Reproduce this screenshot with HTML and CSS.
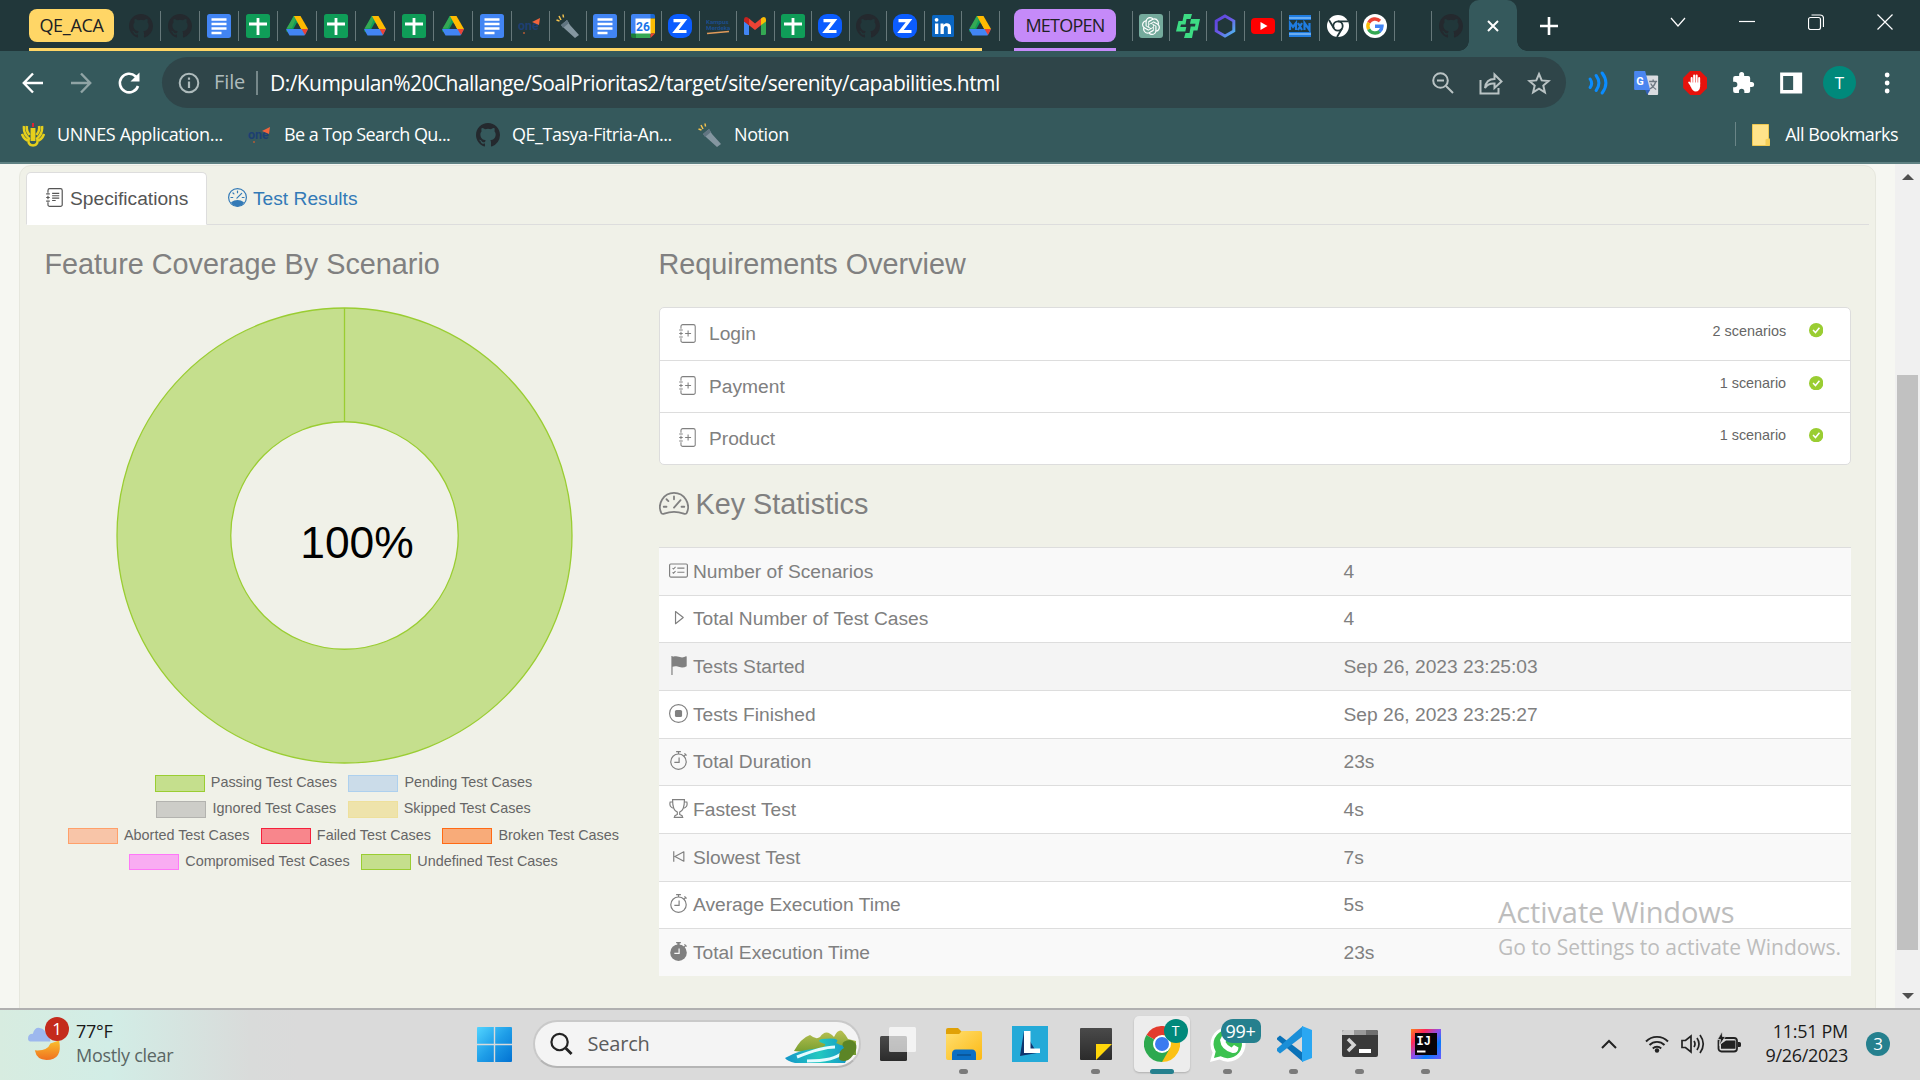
FILE: index.html
```html
<!DOCTYPE html>
<html lang="en">
<head>
<meta charset="utf-8">
<title>Serenity Report - Capabilities</title>
<link rel="stylesheet" href="styles.css">
</head>
<body>
<svg class="sprite" aria-hidden="true">
  <defs>
    <linearGradient id="g-win" x1="0" y1="0" x2="1" y2="1"><stop offset="0" stop-color="#52d4ff"/><stop offset=".5" stop-color="#1f9ee8"/><stop offset="1" stop-color="#0272d2"/></linearGradient>
    <linearGradient id="g-moon" x1="0" y1="0" x2="0" y2="1"><stop offset="0" stop-color="#fbc02d"/><stop offset="1" stop-color="#ef7020"/></linearGradient>
    <linearGradient id="g-folder" x1="0" y1="0" x2="1" y2="1"><stop offset="0" stop-color="#ffdf70"/><stop offset="1" stop-color="#fcb914"/></linearGradient>
    <linearGradient id="g-hex" x1="0" y1="0" x2="1" y2="1"><stop offset="0" stop-color="#5b3fd8"/><stop offset=".5" stop-color="#6c5ae8"/><stop offset="1" stop-color="#4cc0f0"/></linearGradient>
    <linearGradient id="g-ij" x1="0" y1="0" x2="1" y2="1"><stop offset="0" stop-color="#fc801d"/><stop offset=".25" stop-color="#fe2857"/><stop offset=".5" stop-color="#8a50f0"/><stop offset=".7" stop-color="#087cfa"/><stop offset="1" stop-color="#6b57ff"/></linearGradient>
    <linearGradient id="g-river" x1="0" y1="0" x2="1" y2="0"><stop offset="0" stop-color="#1496c8"/><stop offset=".5" stop-color="#22c8c0"/><stop offset="1" stop-color="#128cc8"/></linearGradient>
    <linearGradient id="g-hill" x1="0" y1="0" x2="0" y2="1"><stop offset="0" stop-color="#b8c050"/><stop offset="1" stop-color="#6f9a2c"/></linearGradient>
    <linearGradient id="g-dark" x1="0" y1="0" x2="0" y2="1"><stop offset="0" stop-color="#4a4a4a"/><stop offset="1" stop-color="#2b2b2b"/></linearGradient>
  </defs>
  <symbol id="github" viewBox="0 0 16 16"><path fill="#24292e" d="M8 0C3.58 0 0 3.58 0 8c0 3.54 2.29 6.53 5.47 7.59.4.07.55-.17.55-.38 0-.19-.01-.82-.01-1.49-2.01.37-2.53-.49-2.69-.94-.09-.23-.48-.94-.82-1.13-.28-.15-.68-.52-.01-.53.63-.01 1.08.58 1.23.82.72 1.21 1.87.87 2.33.66.07-.52.28-.87.51-1.07-1.78-.2-3.64-.89-3.64-3.95 0-.87.31-1.59.82-2.15-.08-.2-.36-1.02.08-2.12 0 0 .67-.21 2.2.82a7.6 7.6 0 0 1 4 0c1.53-1.04 2.2-.82 2.2-.82.44 1.1.16 1.92.08 2.12.51.56.82 1.27.82 2.15 0 3.07-1.87 3.75-3.65 3.95.29.25.54.73.54 1.48 0 1.07-.01 1.93-.01 2.2 0 .21.15.46.55.38A8 8 0 0 0 16 8c0-4.42-3.58-8-8-8z"/></symbol>
  <symbol id="docs" viewBox="0 0 24 24"><rect width="24" height="24" rx="2.500" fill="#4285f4"/><path stroke="#fff" stroke-width="2.300" d="M4.500 5.500h15M4.500 10h15M4.500 14.500h15M4.500 19h10"/></symbol>
  <symbol id="sheets" viewBox="0 0 24 24"><rect width="24" height="24" rx="2.500" fill="#0f9d58"/><path stroke="#fff" stroke-width="2.800" d="M12 4v17M3 10h18"/></symbol>
  <symbol id="drive" viewBox="0 0 24 24"><path fill="#0f9d58" d="M8.500 2h1.500l3.500 6-7.500 13-5-4z"/><path fill="#34a853" d="M9 2h3.200L7 14l-5.700.8z"/><path fill="#ffba00" d="M9 2h6.500L23 15h-7z"/><path fill="#4285f4" d="M1 15h22l-3.500 6.500h-15z"/><path fill="#ea4335" d="M16.500 15H23l-3 6z"/><path fill="#21373a" d="M12 8.500l3.700 6.500H8.300z"/></symbol>
  <symbol id="torch" viewBox="0 0 24 24"><path fill="#8496a0" d="M5 11l6-5 3 5 9 10-4 3-10-9z"/><path fill="#617581" d="M5 11l6-5 2 3-6 5z"/><path stroke="#f4c34e" stroke-width="1.500" d="M.5 6l3 1M3 2l2 4M7 .5l.5 3"/></symbol>
  <symbol id="zed" viewBox="0 0 24 24"><rect width="24" height="24" rx="9" fill="#0b5cff"/><path fill="none" stroke="#fff" stroke-width="3.200" d="M5.500 6.700H16L7.500 17.500H18.500"/></symbol>
  <symbol id="gmail" viewBox="0 0 24 24"><path fill="#4285f4" d="M1 7l5 4v10H2.500Q1 21 1 19.500z"/><path fill="#34a853" d="M23 7l-5 4v10h3.500q1.500 0 1.500-1.500z"/><path fill="#ea4335" d="M6 4.500l6 5 6-5v6.800l-6 4.700-6-4.700z"/><path fill="#c5221f" d="M1 5.500Q1 3 3 3t3 1.500v6.800L1 7.500z"/><path fill="#fbbc04" d="M23 5.500Q23 3 21 3t-3 1.500v6.800l5-3.800z"/></symbol>
  <symbol id="linkedin" viewBox="0 0 24 24"><rect x="1" y="1" width="22" height="22" rx="1.500" fill="#0a66c2"/><path fill="#fff" d="M4 9.500h3.300V20H4zM9.500 9.500h3v1.500c2-2.800 7.500-2.200 7.500 2.800V20h-3.200v-5.500c0-3.300-4-3.200-4 0V20H9.500z"/><circle cx="5.600" cy="5.800" r="1.900" fill="#fff"/></symbol>
  <symbol id="openai" viewBox="0 0 24 24"><rect width="24" height="24" rx="3" fill="#74aa9c"/><path fill="#fff" transform="translate(3 3) scale(.75)" d="M22.2819 9.8211a5.9847 5.9847 0 0 0-.5157-4.9108 6.0462 6.0462 0 0 0-6.5098-2.9A6.0651 6.0651 0 0 0 4.9807 4.1818a5.9847 5.9847 0 0 0-3.9977 2.9 6.0462 6.0462 0 0 0 .7427 7.0966 5.98 5.98 0 0 0 .511 4.9107 6.051 6.051 0 0 0 6.5146 2.9001A5.9847 5.9847 0 0 0 13.2599 24a6.0557 6.0557 0 0 0 5.7718-4.2058 5.9894 5.9894 0 0 0 3.9977-2.9001 6.0557 6.0557 0 0 0-.7475-7.073zm-9.022 12.6081a4.4755 4.4755 0 0 1-2.8764-1.0408l.1419-.0804 4.7783-2.7582a.7948.7948 0 0 0 .3927-.6813v-6.7369l2.02 1.1686a.071.071 0 0 1 .038.052v5.5826a4.504 4.504 0 0 1-4.4945 4.4944zm-9.6607-4.1254a4.4708 4.4708 0 0 1-.5346-3.0137l.142.0852 4.783 2.7582a.7712.7712 0 0 0 .7806 0l5.8428-3.3685v2.3324a.0804.0804 0 0 1-.0332.0615L9.74 19.9502a4.4992 4.4992 0 0 1-6.1408-1.6464zM2.3408 7.8956a4.485 4.485 0 0 1 2.3655-1.9728V11.6a.7664.7664 0 0 0 .3879.6765l5.8144 3.3543-2.0201 1.1685a.0757.0757 0 0 1-.071 0l-4.8303-2.7865A4.504 4.504 0 0 1 2.3408 7.872zm16.5963 3.8558L13.1038 8.364 15.1192 7.2a.0757.0757 0 0 1 .071 0l4.8303 2.7913a4.4944 4.4944 0 0 1-.6765 8.1042v-5.6772a.79.79 0 0 0-.407-.667zm2.0107-3.0231l-.142-.0852-4.7735-2.7818a.7759.7759 0 0 0-.7854 0L9.409 9.2297V6.8974a.0662.0662 0 0 1 .0284-.0615l4.8303-2.7866a4.4992 4.4992 0 0 1 6.6802 4.66zM8.3065 12.863l-2.02-1.1638a.0804.0804 0 0 1-.038-.0567V6.0742a4.4992 4.4992 0 0 1 7.3757-3.4537l-.142.0805L8.704 5.459a.7948.7948 0 0 0-.3927.6813zm1.0976-2.3654l2.602-1.4998 2.6069 1.4998v2.9994l-2.5974 1.4997-2.6067-1.4997Z"/></symbol>
  <symbol id="green" viewBox="0 0 24 24"><path fill="#3ddc84" d="M8 0h8l-1.500 5h-4l-1 5.500H5L4.300 13h6l-1 4.500H0L2.500 7h4zM15 5h9l-2.500 11.500h-4L16 24H8l1.500-5h4l1.200-6.500H19l.5-2.700h-5.500z"/></symbol>
  <symbol id="hexa" viewBox="0 0 24 24"><path fill="none" stroke="url(#g-hex)" stroke-width="3" d="M12 2l8.800 5v10L12 22l-8.800-5V7z"/></symbol>
  <symbol id="youtube" viewBox="0 0 24 24"><rect y="4" width="24" height="16" rx="4" fill="#f00"/><path fill="#fff" d="M9.500 8l7 4-7 4z"/></symbol>
  <symbol id="mxn" viewBox="0 0 24 24"><path fill="#1f7ce0" d="M1 1h22v5H1zM1 18h22v5H1z"/><path stroke="#b6dcff" d="M1 4h22M1 20h22"/><path fill="none" stroke="#1f7ce0" stroke-width="2.200" d="M2 16V9l3 4 3-4v7M10 9l4 7M14 9l-4 7M16.500 16V9l5 7V9"/></symbol>
  <symbol id="chromew" viewBox="0 0 24 24"><circle cx="12" cy="12" r="11" fill="#fff"/><circle cx="12" cy="12" r="4.700" fill="none" stroke="#21373a" stroke-width="1.800"/><path stroke="#21373a" stroke-width="1.800" d="M12 7.300h10M8 14.500L3 6M16 14.500L11 23"/></symbol>
  <symbol id="google" viewBox="0 0 24 24"><circle cx="12" cy="12" r="12" fill="#fff"/><g fill="none" stroke-width="3.400"><path stroke="#ea4335" d="M5.700 8.800A7.100 7.100 0 0 1 17 7"/><path stroke="#fbbc05" d="M5.700 15.200a7 7 0 0 1 0-6.400"/><path stroke="#34a853" d="M5.700 15.200A7.100 7.100 0 0 0 16.800 17.200"/><path stroke="#4285f4" d="M12 12.200h7A7 7 0 0 1 16.500 17.500"/></g></symbol>
  <symbol id="unnes" viewBox="0 0 24 24"><path fill="none" stroke="#e6cf1c" stroke-width="2.500" d="M10.800 5v13M13.200 5v13M8.500 16Q2 11 3 3M8.500 12Q5 8 6 3M15.500 16Q22 11 21 3M15.500 12Q19 8 18 3M8.500 18Q3 17 1 11M15.500 18Q21 17 23 11M8 15q-2 7 4 7.500M16 15q2 7-4 7.500"/><path fill="#d23" d="M11 0h2v4h-2z"/></symbol>
  <symbol id="journal-text" viewBox="0 0 16 16"><g fill="none" stroke="currentColor"><path d="M2.500 4V2A1.500 1.500 0 0 1 4 .5h9A1.500 1.500 0 0 1 14.500 2v12a1.500 1.500 0 0 1-1.500 1.500H4A1.500 1.500 0 0 1 2.500 14v-2M2.500 6.500v3M1 5h3M1 8h3M1 11h3M6 4.500h6M6 6.500h6M6 8.500h6M6 10.500h3"/></g></symbol>
  <symbol id="journal-plus" viewBox="0 0 16 16"><path fill="none" stroke="currentColor" stroke-width=".9" d="M2.500 4V2A1.500 1.500 0 0 1 4 .5h9A1.500 1.500 0 0 1 14.500 2v12a1.500 1.500 0 0 1-1.500 1.500H4A1.500 1.500 0 0 1 2.500 14v-2M2.500 6.500v3M1 5h3M1 8h3M1 11h3M8.500 5.500v5M6 8h5"/></symbol>
  <symbol id="speed" viewBox="0 0 16 16"><circle cx="8" cy="8" r="7.500" fill="none" stroke="currentColor"/><path fill="none" stroke="currentColor" stroke-linecap="round" d="M8 2.500v1.500M4.200 4.200l.8.800M2.500 8h1.500M12 8h1.500M7.500 8.500l4-4"/><path fill="currentColor" d="M2.500 12q5.500-4 11 0A7 7 0 0 1 8 15.500 7 7 0 0 1 2.500 12z"/></symbol>
  <symbol id="speed2" viewBox="0 0 16 16"><path fill="none" stroke="currentColor" stroke-width=".95" stroke-linecap="round" d="M1.200 13.300A7.500 7.500 0 1 1 14.800 13.300Q14.200 14.100 13.200 13.700Q8 11.800 2.800 13.700Q1.800 14.100 1.200 13.300zM8 4.500v1.500M4 6l1 1M2.500 10h1.500M12 10h1.500M8 10.500l3.500-4"/></symbol>
  <symbol id="check" viewBox="0 0 16 16"><circle cx="8" cy="8" r="8" fill="#9acd32"/><path fill="none" stroke="#fff" stroke-width="1.700" d="M4.500 7.800l2.700 2.800 4.400-5.200"/></symbol>
  <symbol id="checklist" viewBox="0 0 16 16"><g fill="none" stroke="currentColor"><rect x=".5" y="2.500" width="15" height="11" rx="1"/><path d="M7 6h6M7 9.500h6M3 6l.8.800 1.700-1.800M3 9.500l.8.800 1.700-1.800" stroke-width=".9"/></g></symbol>
  <symbol id="play" viewBox="0 0 16 16"><path fill="none" stroke="currentColor" stroke-linejoin="round" d="M5.500 3v10.200L12 8z"/></symbol>
  <symbol id="flag" viewBox="0 0 16 16"><path fill="currentColor" d="M2 0h1v.6Q4 0 6 .3t5 1Q13 1 14.300.2q.6-.2.600.4v8q-2 1.100-4 1T6.500 8.700Q4.500 8.400 3 9v7H2z"/></symbol>
  <symbol id="stop" viewBox="0 0 16 16"><circle cx="8" cy="8" r="7.500" fill="none" stroke="currentColor"/><rect x="5" y="5" width="6" height="6" rx="1.300" fill="currentColor"/></symbol>
  <symbol id="watch" viewBox="0 0 16 16"><circle cx="8" cy="9" r="6.500" fill="none" stroke="currentColor"/><path fill="none" stroke="currentColor" d="M8.500 5.500v4h-4M6 .5h4M8 .5v2M13 2l1.800 1.800M12.500 4.500l1.300-1.300"/></symbol>
  <symbol id="watch-fill" viewBox="0 0 16 16"><circle cx="8" cy="9" r="7" fill="currentColor"/><path fill="none" stroke="currentColor" d="M6 .5h4M13 2l1.800 1.800M12.500 4.500l1.300-1.300"/><path stroke="currentColor" stroke-width="2" d="M8 .5v2"/><path fill="none" stroke="#f9f9f9" d="M8.500 5.500v4h-4"/></symbol>
  <symbol id="trophy" viewBox="0 0 16 16"><path fill="none" stroke="currentColor" d="M3 .500h10Q13 10 9 11v2l2 1 .5 1.500h-7L5 14l2-1v-2Q3 10 3 .500zM3 2.500H1Q-.2 7 4.300 8M13 2.500h2Q16.200 7 11.700 8"/></symbol>
  <symbol id="skip" viewBox="0 0 16 16"><path fill="none" stroke="currentColor" stroke-linejoin="round" d="M4 3.500v9M12.500 4v8L5 8z"/></symbol>
</svg>

<header class="browser">
  <div class="tabstrip">
    <div class="group group-yellow">
      <span class="chip">QE_ACA</span>
      <div class="tabs wide">
        <span><svg><use href="#github"/></svg></span><span><svg><use href="#github"/></svg></span><span><svg><use href="#docs"/></svg></span><span><svg><use href="#sheets"/></svg></span><span><svg><use href="#drive"/></svg></span><span><svg><use href="#sheets"/></svg></span><span><svg><use href="#drive"/></svg></span><span><svg><use href="#sheets"/></svg></span><span><svg><use href="#drive"/></svg></span><span><svg><use href="#docs"/></svg></span>
      </div>
      <div class="tabs">
        <span><svg viewBox="0 0 24 24"><text class="logo-one" x="0" y="16">one</text><path fill="#f0643c" d="M14 8l8-4-1 7z"/><circle cx="6" cy="19" r="1" fill="#b55b35"/></svg></span><span><svg><use href="#torch"/></svg></span><span><svg><use href="#docs"/></svg></span>
        <span><svg viewBox="0 0 24 24"><path fill="#fff" d="M4 4h16v16H4z"/><path fill="#4285f4" d="M0 2q0-2 2-2h18v4.500H4.500V20H0z"/><path fill="#1967d2" d="M19.500 0H22q2 0 2 2v2.500h-4.500z"/><path fill="#fbbc04" d="M19.500 4.500H24v15h-4.500z"/><path fill="#34a853" d="M4.500 19.500h15V24h-15z"/><path fill="#188038" d="M0 19.500h4.500V24H2q-2 0-2-2z"/><path fill="#ea4335" d="M19.500 19.500H24L19.500 24z"/><text class="logo-day" x="5" y="16.500">26</text></svg></span>
        <span><svg><use href="#zed"/></svg></span>
        <span><svg viewBox="0 0 24 24"><text class="logo-km" x="0" y="9.500">Kampus</text><text class="logo-km" x="0" y="16">Merdeka</text><path stroke="#e09a5a" stroke-width="1.500" d="M1 19.500l22-2"/></svg></span>
        <span><svg><use href="#gmail"/></svg></span><span><svg><use href="#sheets"/></svg></span><span><svg><use href="#zed"/></svg></span><span><svg><use href="#github"/></svg></span><span><svg><use href="#zed"/></svg></span><span><svg><use href="#linkedin"/></svg></span><span><svg><use href="#drive"/></svg></span>
      </div>
    </div>
    <div class="group group-purple"><span class="chip">METOPEN</span></div>
    <div class="tabs loose">
      <span><svg><use href="#openai"/></svg></span><span><svg><use href="#green"/></svg></span><span><svg><use href="#hexa"/></svg></span><span><svg><use href="#youtube"/></svg></span><span><svg><use href="#mxn"/></svg></span><span><svg><use href="#chromew"/></svg></span><span><svg><use href="#google"/></svg></span><span></span><span><svg><use href="#github"/></svg></span>
    </div>
    <div class="tab-active"><svg viewBox="0 0 12 12"><path stroke="#fff" stroke-width="2" d="M1 1l10 10M11 1L1 11"/></svg></div>
    <svg class="newtab" viewBox="0 0 18 18"><path stroke="#fff" stroke-width="2.600" d="M9 0v18M0 9h18"/></svg>
    <div class="winctl">
      <svg viewBox="0 0 16 16"><path d="M1 4l7 8 7-8"/></svg>
      <svg viewBox="0 0 16 16"><path d="M0 7.500h16"/></svg>
      <svg viewBox="0 0 16 16"><rect x=".5" y="3.500" width="12" height="12" rx="2"/><path d="M3.500 1h8.500q3.500 0 3.500 3.500V13"/></svg>
      <svg viewBox="0 0 16 16"><path d="M.5.5l15 15M15.500.5l-15 15"/></svg>
    </div>
  </div>

  <div class="toolbar">
    <div class="nav">
      <svg viewBox="0 0 24 24"><path fill="none" stroke="#fff" stroke-width="2.400" d="M22 12H3M12 2.500L2.800 12l9.200 9.500"/></svg>
      <svg class="dim" viewBox="0 0 24 24"><path fill="none" stroke="#fff" stroke-width="2.400" d="M2 12h19M12 2.500l9.200 9.500-9.200 9.500"/></svg>
      <svg viewBox="0 0 24 24"><path fill="none" stroke="#fff" stroke-width="2.600" d="M21 15a9.300 9.300 0 1 1-2.500-9.800L21 7.500"/><path fill="#fff" d="M22.500 1.500v9h-9z"/></svg>
    </div>
    <div class="omnibox">
      <svg class="info" viewBox="0 0 22 22"><circle cx="11" cy="11" r="9.300" fill="none" stroke="#aebbbc" stroke-width="2"/><path stroke="#aebbbc" stroke-width="2.200" d="M11 9.500v6.500M11 5.500v2.300"/></svg>
      <span class="scheme">File</span>
      <span class="url">D:/Kumpulan%20Challange/SoalPrioritas2/target/site/serenity/capabilities.html</span>
      <div class="actions">
        <svg viewBox="0 0 24 24"><circle cx="9.500" cy="9.500" r="7.300"/><path d="M15 15l7 7M6 9.500h7"/></svg>
        <svg viewBox="0 0 24 24"><path d="M1.500 9v13.500h18V17M6 17q1-9 9.500-9V3.500l7 7-7 6.500v-4.500Q9 12 6 17z"/></svg>
        <svg viewBox="0 0 24 24"><path d="M12 3l2.700 6.400 6.900.6-5.300 4.500 1.600 6.800-5.900-3.600-5.900 3.600 1.600-6.800L2.400 10l6.900-.6z"/></svg>
      </div>
    </div>
    <div class="extensions">
      <svg viewBox="0 0 24 24"><path fill="none" stroke="#0a8cff" stroke-width="3" stroke-linecap="round" d="M4 8q3 4.500 0 8.500M10 4.500q5.500 7.500 0 15M16 2q7.500 10 0 20"/></svg>
      <svg viewBox="0 0 24 24"><path fill="#dadce0" d="M11 4.500h12q1 0 1 1V23q0 1-1 1H14z"/><path fill="#4a86f0" d="M0 1q0-1 1-1h10l5 19H1q-1 0-1-1z"/><path fill="#3360b8" d="M11 19h5l-3 5z"/><text class="logo-g" x="2" y="13.500">G</text><path fill="none" stroke="#6c7680" stroke-width="1.300" d="M15 10.500h8M19 8.500v2M21.500 10.500q-1 5-6 7.500M16.500 12.500q2 4 5.500 6"/></svg>
      <svg viewBox="0 0 24 24"><path fill="#e6120c" d="M7 0h10l7 7v10l-7 7H7l-7-7V7z"/><path fill="none" stroke="#fff" stroke-width="2" stroke-linecap="round" d="M8.500 14V7M11 12V4.500M13.500 12V4.500M16 13V7M8.500 15l-2.500-3.500"/><path fill="#fff" d="M7.500 11.500H17v4q-.5 5-4.500 5-3 0-5-5z"/></svg>
      <svg viewBox="0 0 24 24"><path fill="#fff" d="M20.500 11H19V7a2 2 0 0 0-2-2h-4V3.500a2.500 2.500 0 0 0-5 0V5H4a2 2 0 0 0-2 2v3.800h1.500a2.700 2.700 0 0 1 0 5.400H2V20a2 2 0 0 0 2 2h3.800v-1.500a2.700 2.700 0 0 1 5.400 0V22H17a2 2 0 0 0 2-2v-4h1.500a2.500 2.500 0 0 0 0-5z"/></svg>
      <svg viewBox="0 0 24 24"><path fill="#fff" fill-rule="evenodd" d="M1 1.500h22v21H1zM4 5v14h10V5z"/></svg>
      <span class="avatar">T</span>
      <svg viewBox="0 0 24 24" fill="#fff"><circle cx="12" cy="4" r="2.400"/><circle cx="12" cy="12" r="2.400"/><circle cx="12" cy="20" r="2.400"/></svg>
    </div>
  </div>

  <div class="bookmarks">
    <span class="bm bm1"><svg><use href="#unnes"/></svg>UNNES Application...</span>
    <span class="bm bm2"><svg viewBox="0 0 24 24"><text class="logo-one" x="0" y="16">one</text><path fill="#f0643c" d="M14 8l8-4-1 7z"/><circle cx="6" cy="19" r="1" fill="#b55b35"/></svg>Be a Top Search Qu...</span>
    <span class="bm bm3"><svg><use href="#github"/></svg>QE_Tasya-Fitria-An...</span>
    <span class="bm bm4"><svg><use href="#torch"/></svg>Notion</span>
    <span class="bm all"><svg viewBox="0 0 18 22"><path fill="#ffe38a" stroke="#eec850" d="M.5.5h16v14l1 1v6H.5z"/><path fill="#f5cf58" d="M13.500 15.500l4-1.500v7.500h-4z"/></svg>All Bookmarks</span>
  </div>
</header>

<main class="viewport">
  <section class="panel">
    <nav class="report-tabs">
      <a class="active"><svg><use href="#journal-text"/></svg>Specifications</a>
      <a><svg><use href="#speed"/></svg>Test Results</a>
    </nav>
    <div class="columns">
      <div class="coverage">
        <h3>Feature Coverage By Scenario</h3>
        <svg class="donut" viewBox="0 0 458 458">
          <circle cx="229" cy="229" r="171" fill="none" stroke="#c5df8d" stroke-width="114"/>
          <g fill="none" stroke="#9acd32" stroke-width="1.300"><circle cx="229" cy="229" r="228"/><circle cx="229" cy="229" r="114"/><path d="M229 1v114"/></g>
          <text x="241.500" y="252">100%</text>
        </svg>
        <div class="legend">
          <div><span class="passing">Passing Test Cases</span><span class="pending">Pending Test Cases</span></div>
          <div><span class="ignored">Ignored Test Cases</span><span class="skipped">Skipped Test Cases</span></div>
          <div><span class="aborted">Aborted Test Cases</span><span class="failed">Failed Test Cases</span><span class="broken">Broken Test Cases</span></div>
          <div><span class="compromised">Compromised Test Cases</span><span class="passing">Undefined Test Cases</span></div>
        </div>
      </div>
      <div class="overview">
        <h3>Requirements Overview</h3>
        <ul class="requirements">
          <li><svg><use href="#journal-plus"/></svg><b>Login</b><small>2 scenarios</small><svg class="ok"><use href="#check"/></svg></li>
          <li><svg><use href="#journal-plus"/></svg><b>Payment</b><small>1 scenario</small><svg class="ok"><use href="#check"/></svg></li>
          <li><svg><use href="#journal-plus"/></svg><b>Product</b><small>1 scenario</small><svg class="ok"><use href="#check"/></svg></li>
        </ul>
        <h3 class="stats-title"><svg><use href="#speed2"/></svg>Key Statistics</h3>
        <div class="stats">
          <div><span><svg><use href="#checklist"/></svg>Number of Scenarios</span><span>4</span></div>
          <div><span><svg><use href="#play"/></svg>Total Number of Test Cases</span><span>4</span></div>
          <div class="hover"><span><svg><use href="#flag"/></svg>Tests Started</span><span>Sep 26, 2023 23:25:03</span></div>
          <div><span><svg><use href="#stop"/></svg>Tests Finished</span><span>Sep 26, 2023 23:25:27</span></div>
          <div><span><svg><use href="#watch"/></svg>Total Duration</span><span>23s</span></div>
          <div><span><svg><use href="#trophy"/></svg>Fastest Test</span><span>4s</span></div>
          <div><span><svg><use href="#skip"/></svg>Slowest Test</span><span>7s</span></div>
          <div><span><svg><use href="#watch"/></svg>Average Execution Time</span><span>5s</span></div>
          <div><span><svg><use href="#watch-fill"/></svg>Total Execution Time</span><span>23s</span></div>
        </div>
      </div>
    </div>
  </section>
  <div class="scrollbar">
    <svg viewBox="0 0 12 6"><path fill="#505050" d="M0 6l6-6 6 6z"/></svg>
    <i></i>
    <svg viewBox="0 0 12 6"><path fill="#505050" d="M0 0l6 6 6-6z"/></svg>
  </div>
</main>

<div class="watermark"><p>Activate Windows</p><p class="sub">Go to Settings to activate Windows.</p></div>

<footer class="taskbar">
  <div class="weather">
    <div class="weather-icon">
      <svg viewBox="0 0 36 40"><path fill="url(#g-moon)" d="M7 27q13 1 16-7l9-3q4 20-13 20-10 0-12-10z"/><path fill="#9db8ee" d="M0 15q0-5 5-5Q7 3 12 4q6 1 7 7 4 1 4 7H4q-4 0-4-3z"/></svg>
      <em>1</em>
    </div>
    <div><p>77°F</p><p class="muted">Mostly clear</p></div>
  </div>
  <svg class="start" viewBox="0 0 35 35"><path fill="url(#g-win)" d="M1 0h15.800v16.800H0V1q0-1 1-1zM18.200 0H34q1 0 1 1v15.800H18.200zM0 18.200h16.800V35H1q-1 0-1-1zM18.200 18.200H35V34q0 1-1 1H18.200z"/></svg>
  <div class="search">
    <svg class="mag" viewBox="0 0 24 24"><circle cx="10" cy="10" r="8.500" fill="none" stroke="#222" stroke-width="2.300"/><path stroke="#222" stroke-width="3" d="M16.500 16.500l6 6"/></svg>
    <span>Search</span>
    <svg class="scene" viewBox="0 0 72 34"><path fill="url(#g-hill)" d="M9 21Q16 8 25 5q6 5 10 2 6-9 14 0 4-8 8-6 4 4 6 8l8 2v14L40 24z"/><path fill="url(#g-river)" d="M0 28q14-8 28-9 14-2 12-5-10-3-3-5 20-2 14 4 10 6 18 1l-9 19H10Q2 31 0 28z"/><path fill="none" stroke="#e4fbff" stroke-width="3" d="M12 27q25-10 38-10M22 31q28 0 36-9"/><path fill="#5c8526" d="M54 28q0-8 5-10-5-7 6-8 8 2 6 10-6 12-12 11-5 0-5-3z"/></svg>
  </div>
  <div class="apps">
    <div class="app"><svg viewBox="0 0 36 36"><rect x="0" y="10" width="27" height="25" rx="1.500" fill="url(#g-dark)"/><rect x="9" y="1" width="27" height="25" rx="1.500" fill="#fff" fill-opacity=".68"/></svg></div>
    <div class="app open"><svg viewBox="0 0 36 36"><path fill="#e0a106" d="M0 4q0-2 2-2h10l4 4v6H0z"/><path fill="url(#g-folder)" d="M0 8h13l3-3h18q2 0 2 2v25q0 2-2 2H2q-2 0-2-2z"/><path fill="#0b6fc4" d="M6 34V28q0-4.500 4-4.500h16q4 0 4 4.500v6z"/><path stroke="#0a4f8f" stroke-width="1.500" d="M11 29h14"/></svg></div>
    <div class="app"><svg viewBox="0 0 36 36"><path fill="#24aad8" d="M0 0h36v36H0z"/><path fill="#10356f" d="M12 5l-4 25 17-3z"/><path fill="#fff" d="M12 5h6.500v17.500H28V27H12z"/></svg></div>
    <div class="app open"><svg viewBox="0 0 36 36"><rect x="2" y="2" width="32" height="32" rx="1" fill="url(#g-dark)"/><path fill="#ffd60a" d="M18 18h16L18 34z"/></svg></div>
    <div class="app open current"><svg viewBox="0 0 36 36"><circle cx="18" cy="18" r="18" fill="#fff"/><path fill="#e33b2e" d="M18 18L2.400 9A18 18 0 0 1 33.600 9z"/><path fill="#fbc116" d="M18 36a18 18 0 0 0 15.600-27H18z"/><path fill="#2da94f" d="M2.400 9A18 18 0 0 0 18 36l7.800-13.500-7.800-4.500z"/><circle cx="18" cy="18" r="9" fill="#fff"/><circle cx="18" cy="18" r="7" fill="#3a7bf0"/></svg><em class="t">T</em></div>
    <div class="app open"><svg viewBox="0 0 36 36"><path fill="#fff" d="M0 36l2.600-9.500A17.500 17.500 0 1 1 9.500 33.500z"/><path fill="#3cc250" d="M4 32l1.700-6.500a14.200 14.200 0 1 1 5 4.800z"/><path fill="#fff" d="M12 10q2-2 3.500.5l1.500 3-1.500 2.500q2 4 6 5.500l2.500-2.500 4.500 2.500q-.5 6-6 5.500Q11 24 10 14z"/></svg><em class="count">99+</em></div>
    <div class="app open"><svg viewBox="0 0 36 36"><path fill="#0a72b8" d="M1 12l3-2.500L27 27v9L1 13.500z"/><path fill="#1a8fd8" d="M27 0v10L4 27.500 1 25v-2.500z"/><path fill="#2aa7f2" d="M26 0l10 4v28l-10 4z"/></svg></div>
    <div class="app open"><svg viewBox="0 0 36 36"><rect y="4" width="36" height="27" rx="2" fill="#3a3a3a"/><path fill="#c9c9c9" d="M0 9V6q0-2 2-2h10v5z"/><path fill="#999" d="M12 4h12v5H12z"/><path fill="#6f6f6f" d="M24 4h10q2 0 2 2v3H24z"/><path fill="none" stroke="#d5d5d5" stroke-width="3.500" d="M6 13l6 6-6 6"/><path stroke="#fff" stroke-width="4" d="M17 25h12"/></svg></div>
    <div class="app open"><svg viewBox="0 0 36 36"><path fill="url(#g-ij)" d="M3 3h30v30H3z"/><path fill="#080408" d="M7 7h22v22H7z"/><path stroke="#fff" stroke-width="2" d="M9 25.500h8.500"/><text class="logo-ij" x="8.500" y="18.500">IJ</text></svg></div>
  </div>
  <div class="tray">
    <svg class="chev" viewBox="0 0 16 10"><path fill="none" stroke="#222" stroke-width="2" d="M1 9l7-7 7 7"/></svg>
    <svg viewBox="0 0 24 24"><g fill="none" stroke="#222" stroke-width="1.900"><path d="M1 9.500a15.500 15.500 0 0 1 22 0M4.500 13a10.600 10.600 0 0 1 15 0M7.800 16.500a6 6 0 0 1 8.400 0"/></g><circle cx="12" cy="18.500" r="2.200" fill="#222"/></svg>
    <svg viewBox="0 0 24 24"><path fill="none" stroke="#222" stroke-width="1.700" d="M1 8.500h3.500L10 4v16l-5.500-4.500H1zM13 9q2 3 0 6M16 6q4 6 0 12M19 3q6.500 9 0 18"/></svg>
    <svg viewBox="0 0 24 24"><rect x="1.500" y="6" width="18.500" height="13.500" rx="3" fill="none" stroke="#222" stroke-width="1.800"/><path fill="#222" d="M4 16.800V12l5-3.500h9.500v8.300zM21 10h1.500q1.500 0 1.500 1.500v2q0 1.500-1.500 1.500H21z"/><path fill="#222" stroke="#dadada" stroke-width=".8" d="M5-.5L.5 7.500h3l-1 6 6-9H5.500z"/></svg>
    <div class="clock"><p>11:51 PM</p><p>9/26/2023</p></div>
    <em>3</em>
  </div>
</footer>
</body>
</html>
```
FILE: styles.css
```css
*, *::before, *::after { box-sizing: border-box; margin: 0; padding: 0; }
body {
  width: 1920px; height: 1080px; overflow: hidden;
  display: flex; flex-direction: column;
  font-family: "Segoe UI", "Open Sans", sans-serif;
  background: #f6f7f2;
}
svg { display: block; flex: none; }
.sprite { position: absolute; width: 0; height: 0; }
em { font-style: normal; }

/* Lettering inside logos */
.logo-one { font: 700 12.500px Roboto, sans-serif; letter-spacing: 0; fill: #1d3f72; }
.logo-day { font: 700 12px Roboto, sans-serif; fill: #1a73e8; }
.logo-km { font: 700 6.200px Roboto, sans-serif; fill: #1b4d8c; }
.logo-g { font: 700 11px Roboto, sans-serif; fill: #fff; }
.logo-ij { font: 700 12px "Liberation Mono", monospace; fill: #fff; }

/* Browser chrome */
.browser { height: 164px; flex: none; background: #35595c; border-bottom: 2px solid #5f8183; color: #fff; }
.tabstrip { height: 51px; display: flex; background: #21373a; padding-left: 29px; }
.group { display: flex; height: 51px; border-bottom: 3px solid; align-items: flex-start; }
.group-yellow { border-color: #ffd666; width: 953px; border-radius: 2px 2px 0 0; }
.group-purple { border-color: #c58af9; margin-left: 32px; }
.chip {
  flex: none; margin-top: 9px; height: 33px; border-radius: 8px;
  font-size: 18px; line-height: 32px; text-align: center; color: #202124; letter-spacing: -.3px;
}
.group-yellow .chip { width: 85px; background: #ffd666; margin-right: 8px; }
.group-purple .chip { width: 102px; background: #c58af9; letter-spacing: -.75px; }
.tabs { display: flex; flex: none; padding-top: 11px; }
.tabs span { width: 37.500px; height: 30px; display: flex; align-items: center; justify-content: center; border-right: 1.500px solid #66787a; }
.tabs.wide span { width: 39px; }
.tabs svg { width: 24px; height: 24px; }
.loose { margin-left: 16px; }
.loose span:first-child { border-left: 1.500px solid #66787a; }
.loose span:last-child { border-right: 0; }
.tab-active {
  position: relative; width: 48px; flex: none; background: #35595c; border-radius: 10px 10px 0 0;
  display: flex; align-items: center; justify-content: center; margin-left: -1px;
}
.tab-active::before, .tab-active::after { content: ""; position: absolute; bottom: 0; width: 10px; height: 10px; }
.tab-active::before { left: -10px; background: radial-gradient(circle at 0 0, transparent 9.500px, #35595c 10px); }
.tab-active::after { right: -10px; background: radial-gradient(circle at 100% 0, transparent 9.500px, #35595c 10px); }
.tab-active svg { width: 12px; height: 12px; }
.newtab { width: 18px; height: 18px; margin: 17px 0 0 23px; }
.winctl { margin: 14px 27px 0 auto; display: flex; gap: 53px; }
.winctl svg { width: 16px; height: 16px; fill: none; stroke: #fff; stroke-width: 1.200; }

.toolbar { height: 63px; display: flex; align-items: center; padding: 0 20px 0 21px; }
.nav { display: flex; gap: 24px; width: 141px; }
.nav svg { width: 24px; height: 24px; }
.nav .dim { opacity: .45; }
.omnibox { width: 1404px; height: 51px; border-radius: 26px; background: #2f4549; display: flex; align-items: center; padding: 0 15px 0 16px; font-size: 20px; }
.info { width: 22px; height: 22px; }
.scheme { color: #aebbbc; margin-left: 14px; width: 44px; height: 24px; line-height: 22px; border-right: 2px solid #76888a; letter-spacing: -.1px; }
.url { margin-left: 12px; font-size: 21px; letter-spacing: -.55px; line-height: 24px; white-space: nowrap; }
.actions { margin-left: auto; display: flex; gap: 24px; }
.actions svg { width: 24px; height: 24px; fill: none; stroke: #b9c3c4; stroke-width: 2; }
.extensions { margin-left: 20px; display: flex; gap: 24px; align-items: center; }
.extensions svg { width: 24.300px; height: 24px; }
.avatar { width: 33px; height: 33px; margin: 0 -4.500px; border-radius: 50%; background: #00897b; text-align: center; line-height: 33px; font-size: 17px; }

.bookmarks { height: 48px; display: flex; align-items: center; padding: 0 22px 8px 21px; font-size: 18px; }
.bm { display: flex; align-items: center; gap: 12px; white-space: nowrap; line-height: 24px; }
.bm svg { width: 24px; height: 24px; position: relative; top: 1px; }
.bm1 { width: 227px; letter-spacing: -.35px; }
.bm2 { width: 228px; letter-spacing: -.58px; }
.bm3 { width: 222px; letter-spacing: -.47px; }
.bm4 { letter-spacing: -.4px; }
.all { margin-left: auto; border-left: 1.500px solid #6a8587; padding-left: 16px; gap: 15px; letter-spacing: -.55px; }
.all svg { width: 18px; height: 22px; }

/* Report page */
.viewport { height: 844px; flex: none; display: flex; overflow: hidden; font-family: "Liberation Sans", Arial, sans-serif; font-size: 19.200px; color: #808080; }
.panel { margin: 1px 19px 0 19px; width: 1857px; height: 860px; flex: none; border: 1px solid #e6e7de; border-radius: 12px; background: #f0f1e8; padding: 6px 6px 0 6px; }
.report-tabs { display: flex; height: 53px; border-bottom: 1px solid #ddd; }
.report-tabs a { display: flex; align-items: center; height: 53px; padding: 0 18px; gap: 6px; color: #337ab7; line-height: 24px; }
.report-tabs a svg { width: 19px; height: 19px; margin-top: -2px; }
.report-tabs .active { width: 181px; padding-left: 18px; background: #fff; border: 1px solid #ddd; border-bottom-color: #fff; border-radius: 5px 5px 0 0; color: #555; margin-right: 3px; }
h3 { font-weight: 400; font-size: 28.800px; line-height: 32px; white-space: nowrap; }
.columns { display: flex; padding: 23px 18px 0 18.500px; }
.coverage { width: 614px; flex: none; }
.donut { width: 457px; height: 457px; margin: 27px 0 0 71px; }
.donut text { font-size: 44.500px; text-anchor: middle; fill: #000; }
.legend { width: 598px; font-size: 14.400px; color: #666; padding-top: 10px; }
.legend div { display: flex; justify-content: center; gap: 11.500px; height: 26.300px; }
.legend span { display: flex; gap: 6px; line-height: 17px; height: 17px; white-space: nowrap; }
.legend span::before { content: ""; flex: none; width: 50px; height: 16.500px; margin-top: 1px; background: var(--fill); border: 1.500px solid var(--line); }
.passing { --fill: #c5df8d; --line: #9acd32; }
.pending { --fill: #cbdce9; --line: #add0ee; }
.ignored { --fill: #cdcdc8; --line: #b3b3af; }
.skipped { --fill: #eee3ab; --line: #eee09c; }
.aborted { --fill: #f8c5a8; --line: #ffa06a; }
.failed { --fill: #f8868c; --line: #f5203c; }
.broken { --fill: #f8ab79; --line: #ff6a14; }
.compromised { --fill: #f9acf2; --line: #ff78f8; }

.overview { width: 1192.500px; }
.requirements { list-style: none; margin-top: 27px; border: 1px solid #ddd; border-radius: 5px; background: #fff; height: 158px; }
.requirements li { height: 52px; display: flex; align-items: center; padding: 0 27px 1px 18px; }
.requirements li + li { border-top: 1px solid #ddd; }
.requirements svg { width: 19px; height: 19px; margin-top: -1px; }
.requirements b { font-weight: 400; margin-left: 12.500px; line-height: 24px; padding-top: 1px; }
.requirements small { margin-left: auto; font-size: 14.400px; color: #666; padding-bottom: 6px; }
.requirements .ok { width: 14.400px; height: 14.400px; margin: 0 0 6px 22.500px; }
.stats-title { margin-top: 23px; display: flex; gap: 7px; }
.stats-title svg { width: 30px; height: 30px; }
.stats { margin-top: 27px; }
.stats div { display: flex; height: 47.670px; border-top: 1px solid #ddd; background: #fff; align-items: center; padding: 1px 0 0 10px; }
.stats div:nth-child(odd) { background: #f9f9f9; }
.stats .hover:nth-child(odd) { background: #f4f4f4; }
.stats span { display: flex; align-items: center; line-height: 24px; }
.stats span:first-child { width: 675px; gap: 5.500px; }
.stats svg { width: 19px; height: 19px; margin-top: -3px; }

.scrollbar { width: 25px; flex: none; background: #f0f0f0; display: flex; flex-direction: column; align-items: center; padding: 10px 1px 9px 1px; }
.scrollbar svg { width: 12px; height: 6px; }
.scrollbar i { width: 21px; height: 575px; margin: 195px 0 43px; background: #c1c1c1; }

.watermark { position: absolute; left: 1498px; top: 892px; color: #bdbdbd; }
.watermark p { font-size: 29px; line-height: 40px; letter-spacing: -.1px; white-space: nowrap; }
.watermark .sub { font-size: 21px; line-height: 30px; letter-spacing: -.03px; }

/* Taskbar */
.taskbar { position: relative; height: 72px; flex: none; border-top: 2px solid #b0b0b0; display: flex; align-items: center; background: linear-gradient(90deg, #d7ece0 0, #d2ede6 110px, #d9dbda 250px, #dadada 300px); font-size: 18px; color: #1a1a1a; padding-bottom: 2px; }
.weather { display: flex; width: 476.500px; padding-left: 28px; gap: 10px; line-height: 24px; }
.weather-icon { position: relative; width: 38px; height: 48px; padding-top: 4px; }
.weather-icon svg { width: 35px; height: 39px; }
.weather-icon em { position: absolute; right: -3px; top: -3px; width: 24px; height: 24px; border-radius: 50%; background: #c42b1c; color: #fff; text-align: center; font-size: 17px; line-height: 24px; }
.weather p { letter-spacing: -.3px; position: relative; top: -1px; }
.muted { color: #5a6664; }
.start { width: 35px; height: 35px; }
.search { width: 328px; height: 48px; margin-left: 21px; border-radius: 24px; background: #f4f4f4; border: 2px solid #c9c9c9; border-bottom-color: #b5b5b5; display: flex; align-items: center; padding: 0 2px 0 15px; color: #5c5c5c; font-size: 20px; }
.mag { width: 23px; height: 24px; margin-right: 15px; }
.search span { letter-spacing: -.2px; line-height: 24px; }
.scene { width: 72px; height: 36px; margin: 6px 0 0 auto; }
.apps { display: flex; margin-left: 4px; }
.app { position: relative; width: 66px; height: 60px; display: flex; justify-content: center; padding-top: 12px; }
.app > svg { width: 36px; height: 36px; position: relative; }
.open::after { content: ""; position: absolute; bottom: 0; left: 28.500px; width: 9px; height: 5px; border-radius: 3px; background: #7b7b7b; }
.current::before { content: ""; position: absolute; left: 5px; top: 2px; width: 56px; height: 56px; border-radius: 5px; background: #ededed; box-shadow: 0 1px 2px #0003; }
.current::after { left: 21px; width: 24px; background: #25808e; }
.app em { position: absolute; top: 5px; height: 24px; color: #fff; text-align: center; line-height: 24px; font-size: 17px; }
.app .t { left: 35px; width: 24px; border-radius: 50%; background: #00897b; font-size: 14px; }
.app .count { left: 26px; width: 40px; border-radius: 12px 7px 7px 12px; background: #25808e; font-size: 18px; letter-spacing: -.3px; }
.tray { margin: 0 30px 0 auto; display: flex; align-items: center; gap: 12px; }
.tray svg { width: 24px; height: 24px; }
.tray .chev { width: 16px; height: 10px; margin-right: 16px; }
.clock { width: 95px; text-align: right; line-height: 24px; letter-spacing: -.3px; padding-bottom: 3px; }
.tray em { width: 24px; height: 24px; border-radius: 50%; background: #25808e; color: #fff; text-align: center; line-height: 24px; font-size: 17px; margin-left: 6px; }
```
